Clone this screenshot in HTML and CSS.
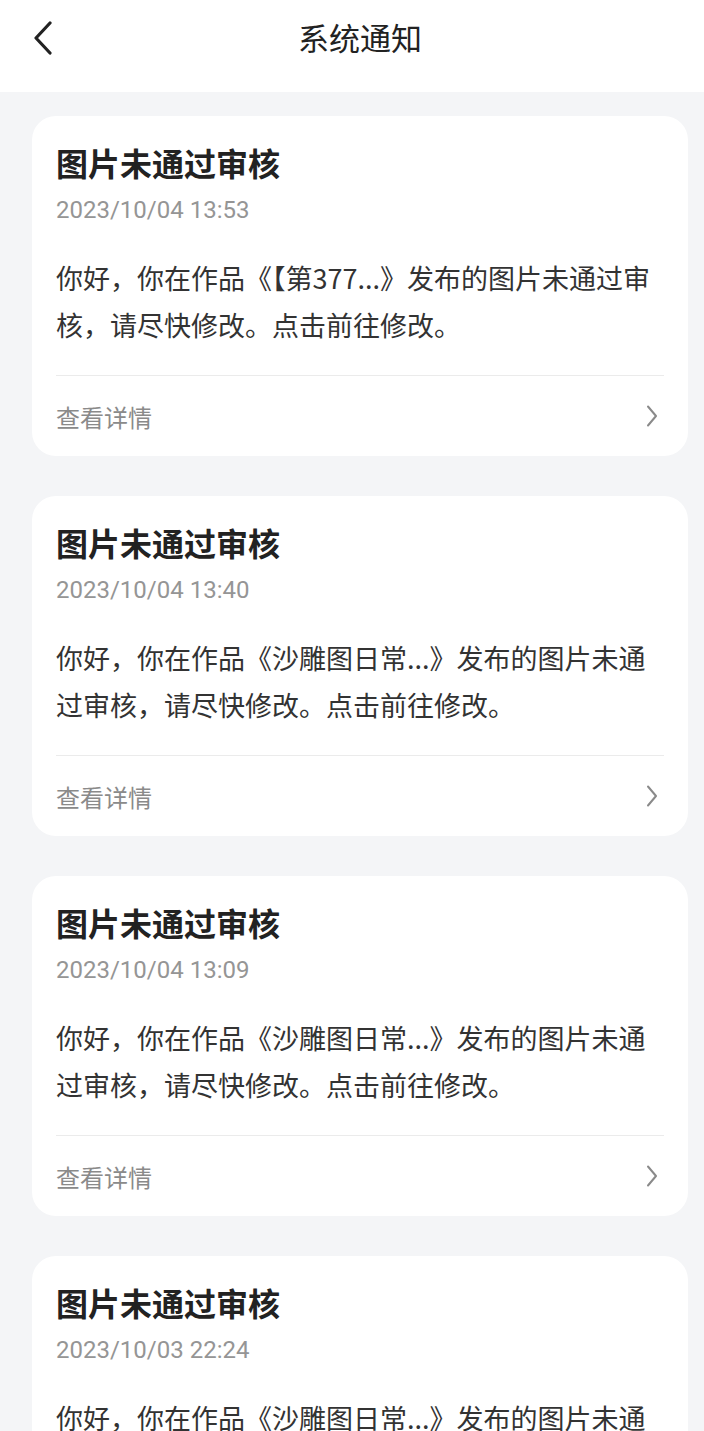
FILE: index.html
```html
<!DOCTYPE html>
<html lang="zh-CN">
<head>
<meta charset="utf-8">
<title>系统通知</title>
<link rel="stylesheet" href="styles.css">
</head>
<body>
<header class="topbar">
  <button class="back" aria-label="返回">
    <svg width="22" height="34" viewBox="0 0 22 34"><path d="M18 2 L4 17 L18 32" fill="none" stroke="#222" stroke-width="3.2" stroke-linecap="round" stroke-linejoin="round"/></svg>
  </button>
  <h1 class="title">系统通知</h1>
</header>
<main class="list">
  <article class="card">
    <h2 class="card-title">图片未通过审核</h2>
    <div class="card-date">2023/10/04 13:53</div>
    <p class="card-body">你好，你在作品《【第377...》发布的图片未通过审核，请尽快修改。点击前往修改。</p>
    <div class="card-foot"><span>查看详情</span><svg class="chev" width="14" height="24" viewBox="0 0 14 24"><path d="M3 2.5 L11 12 L3 21.5" fill="none" stroke="#8a8a8a" stroke-width="2" stroke-linecap="round" stroke-linejoin="round"/></svg></div>
  </article>
  <article class="card">
    <h2 class="card-title">图片未通过审核</h2>
    <div class="card-date">2023/10/04 13:40</div>
    <p class="card-body">你好，你在作品《沙雕图日常...》发布的图片未通过审核，请尽快修改。点击前往修改。</p>
    <div class="card-foot"><span>查看详情</span><svg class="chev" width="14" height="24" viewBox="0 0 14 24"><path d="M3 2.5 L11 12 L3 21.5" fill="none" stroke="#8a8a8a" stroke-width="2" stroke-linecap="round" stroke-linejoin="round"/></svg></div>
  </article>
  <article class="card">
    <h2 class="card-title">图片未通过审核</h2>
    <div class="card-date">2023/10/04 13:09</div>
    <p class="card-body">你好，你在作品《沙雕图日常...》发布的图片未通过审核，请尽快修改。点击前往修改。</p>
    <div class="card-foot"><span>查看详情</span><svg class="chev" width="14" height="24" viewBox="0 0 14 24"><path d="M3 2.5 L11 12 L3 21.5" fill="none" stroke="#8a8a8a" stroke-width="2" stroke-linecap="round" stroke-linejoin="round"/></svg></div>
  </article>
  <article class="card">
    <h2 class="card-title">图片未通过审核</h2>
    <div class="card-date">2023/10/03 22:24</div>
    <p class="card-body">你好，你在作品《沙雕图日常...》发布的图片未通过审核，请尽快修改。点击前往修改。</p>
    <div class="card-foot"><span>查看详情</span><svg class="chev" width="14" height="24" viewBox="0 0 14 24"><path d="M3 2.5 L11 12 L3 21.5" fill="none" stroke="#8a8a8a" stroke-width="2" stroke-linecap="round" stroke-linejoin="round"/></svg></div>
  </article>
</main>
</body>
</html>
```
FILE: styles.css
```css
* { box-sizing: border-box; }
html, body {
  margin: 0;
  padding: 0;
  background: #f4f5f7;
  font-family: "Noto Sans CJK SC", "Noto Sans", sans-serif;
  color: #222;
}
body { height: 1431px; overflow: hidden; }
.topbar {
  position: relative;
  height: 92px;
  background: #fff;
  display: flex;
  align-items: center;
  justify-content: center;
  padding-left: 16px;
}
.back {
  position: absolute;
  left: 32px;
  top: 21px;
  padding: 0;
  border: 0;
  background: none;
  width: 22px;
  height: 34px;
}
.back svg { display: block; }
.title {
  margin: 0;
  font-size: 31px;
  font-weight: 400;
  line-height: 40px;
  margin-top: -18px;
  color: #222;
}
.list {
  padding: 24px 16px 0 32px;
  display: flex;
  flex-direction: column;
  gap: 40px;
}
.card {
  width: 656px;
  background: #fff;
  border-radius: 24px;
  padding: 24px 24px 0 24px;
}
.card-title {
  margin: 0;
  font-size: 32px;
  font-weight: 700;
  line-height: 44px;
  color: #222;
}
.card-date {
  margin-top: 10px;
  font-family: Roboto, "Noto Sans CJK SC", sans-serif;
  font-size: 24px;
  line-height: 32px;
  color: #959595;
}
.card-body {
  margin: 28px 0 0;
  font-size: 27px;
  line-height: 47px;
  color: #333;
  padding-bottom: 27px;
  border-bottom: 1.5px solid #ebebeb;
}
.card-foot {
  height: 80px;
  display: flex;
  align-items: center;
  justify-content: space-between;
  font-size: 24px;
  color: #8a8a8a;
}
.chev { display: block; margin-right: 5px; }
```
